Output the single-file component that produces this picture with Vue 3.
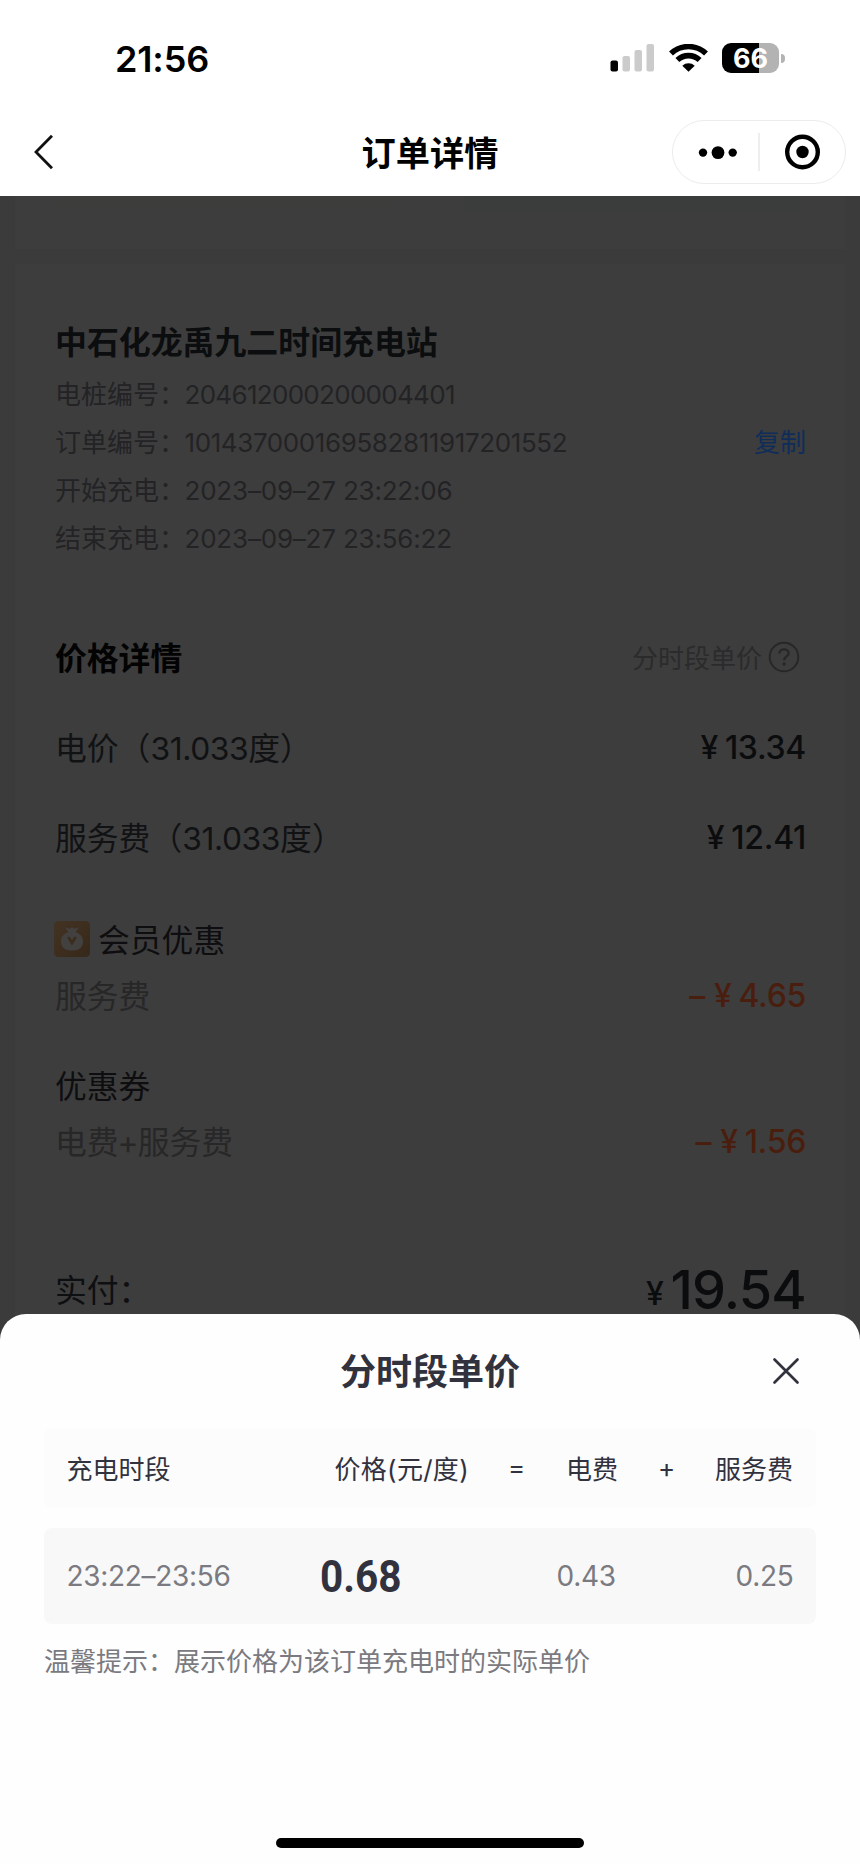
<script setup>
const infos = [
  { label: '电桩编号：', value: '204612000200004401', cls: 'pile' },
  { label: '订单编号：', value: '101437000169582811917201552', cls: 'order', copy: true },
  { label: '开始充电：', value: '2023–09–27 23:22:06' },
  { label: '结束充电：', value: '2023–09–27 23:56:22' },
]
const fees = [
  { name: '电价', price: '13.34' },
  { name: '服务费', price: '12.41' },
]
</script>

<template>
  <div class="page">
    <header class="top">
      <div class="status">
        <span class="time">21:56</span>
        <div class="status-icons">
          <svg width="44" height="28" viewBox="0 0 44 28">
            <rect x="0.5" y="16.5" width="7.5" height="11" rx="2" fill="#000" />
            <rect x="12.5" y="12" width="7.5" height="15.5" rx="2" fill="#cbcbcb" />
            <rect x="24.5" y="6" width="7.5" height="21.5" rx="2" fill="#cbcbcb" />
            <rect x="36.5" y="0" width="7.5" height="27.5" rx="2" fill="#cbcbcb" />
          </svg>
          <svg class="wifi" width="39" height="28" viewBox="0 0 39 28">
            <g fill="none" stroke="#000" stroke-width="5.6">
              <path d="M2 9.6A25.3 25.3 0 0 1 37 9.6" />
              <path d="M8.4 16.1A16 16 0 0 1 30.6 16.1" />
            </g>
            <path d="M13.3 21.7A9 9 0 0 1 25.7 21.7L19.5 27.8Z" fill="#000" />
          </svg>
          <div class="battery">66</div>
          <i class="nub"></i>
        </div>
      </div>
      <div class="nav">
        <svg class="back" width="22" height="36" viewBox="0 0 22 36" fill="none" stroke="#111" stroke-width="2.8"><path d="M19 1.7L3 18L19 34.3" /></svg>
        <h1>订单详情</h1>
        <div class="capsule">
          <svg width="172" height="62" viewBox="0 0 172 62">
            <circle cx="30" cy="31.6" r="4.2" />
            <circle cx="45" cy="31.6" r="6.4" />
            <circle cx="59.7" cy="31.6" r="4.2" />
            <path d="M86 12V50" stroke="#e3e3e3" stroke-width="1.2" />
            <circle cx="129.5" cy="31" r="15.3" fill="none" stroke="#000" stroke-width="4.4" />
            <circle cx="129.5" cy="31" r="6.2" />
          </svg>
        </div>
      </div>
    </header>

    <main class="content">
      <section class="prev"><i class="warm"></i><i class="cool"></i></section>
      <section class="card">
        <h2 class="station">中石化龙禹九二时间充电站</h2>
        <div v-for="r in infos" :key="r.label" class="info">
          <span>{{ r.label }}</span><span class="value" :class="r.cls">{{ r.value }}</span>
          <span v-if="r.copy" class="copy">复制</span>
        </div>
        <div class="heading">
          <h2>价格详情</h2>
          <span class="hint">分时段单价
            <svg width="32" height="32" viewBox="0 0 32 32" fill="none" stroke="#272728" stroke-width="2">
              <circle cx="16" cy="16" r="14.3" />
              <path d="M11.3 12.6C11.5 6.8 20.8 7 20.7 12.3C20.6 15.3 16.2 15.6 16.1 19.2" stroke-width="2.3" />
              <circle cx="16.1" cy="23" r="1.7" fill="#272728" stroke="none" />
            </svg>
          </span>
        </div>
        <div v-for="f in fees" :key="f.name" class="row">
          <span class="desc">{{ f.name }}（<b>31.033</b>度）</span>
          <span class="money"><i>¥</i><span>{{ f.price }}</span></span>
        </div>
        <div class="line first">
          <svg width="36" height="36" viewBox="0 0 36 36">
            <defs><linearGradient id="gold" x1="0" y1="0" x2="1" y2="1"><stop offset="0" stop-color="#433323" /><stop offset="1" stop-color="#362819" /></linearGradient></defs>
            <rect width="36" height="36" rx="4.500" fill="url(#gold)" />
            <path d="M11 6.500L16 7.800L18 6L20 7.800L25 6.500L21.500 11C26 12.600 29 16 29 20.200C29 26.800 24.500 29.600 18 29.600S7 26.800 7 20.200C7 16 10 12.600 14.500 11Z" fill="#434140" />
            <path d="M14.300 16L18 22L21.700 16" fill="none" stroke="#3b2c1d" stroke-width="2.600" />
          </svg>
          <span>会员优惠</span>
        </div>
        <div class="line sub"><span>服务费</span><span class="money off"><em>–</em><i>¥</i><span>4.65</span></span></div>
        <div class="line second"><span>优惠券</span></div>
        <div class="line sub"><span>电费<b class="plus">+</b>服务费</span><span class="money off"><em>–</em><i>¥</i><span>1.56</span></span></div>
        <div class="total"><span>实付：</span><span class="money"><i>¥</i><strong>19.54</strong></span></div>
      </section>
    </main>

    <section class="sheet">
      <div class="sheet-head">
        <h2>分时段单价</h2>
        <svg class="close" width="28" height="28" viewBox="0 0 28 28" fill="none" stroke="#32323f" stroke-width="2.7" stroke-linecap="round"><path d="M2.500 2.500L25.500 25.500M25.500 2.500L2.500 25.500" /></svg>
      </div>
      <div class="thead">
        <span>充电时段</span><span class="unit">价格(元/度)</span><span>=</span><span>电费</span><span>+</span><span>服务费</span>
      </div>
      <div class="trow">
        <span>23:22–23:56</span><span class="sum">0.68</span><span>0.43</span><span>0.25</span>
      </div>
      <p class="tip">温馨提示：展示价格为该订单充电时的实际单价</p>
      <i class="home"></i>
    </section>
  </div>
</template>

<style>
html, body { margin: 0; background: #fff; }
</style>

<style scoped>
.page { width: 860px; height: 1864px; display: flex; flex-direction: column; overflow: hidden; background: #fff; font-family: Inter, "Noto Sans CJK SC", sans-serif; }
.page * { box-sizing: border-box; }
h1, h2, p { margin: 0; }
i, em { font-style: normal; }
b { font-weight: inherit; }
span, h1, h2, p { white-space: nowrap; }
.top { height: 196px; flex: none; }
.status { height: 118px; display: flex; justify-content: space-between; padding: 0 75px 0 115px; }
.time { font-size: 36px; font-weight: 600; line-height: 118px; letter-spacing: -0.15px; }
.status-icons { display: flex; align-items: center; height: 116px; }
.wifi { margin-left: 15px; }
.battery { width: 57px; height: 30px; border-radius: 9px; margin-left: 14px; background: linear-gradient(90deg, #000 0 37.5px, #b3b3b3 37.5px); color: #fff; font-size: 27px; font-weight: 700; line-height: 32px; text-align: center; }
.nub { width: 4px; height: 9px; border-radius: 0 5px 5px 0; background: #b3b3b3; margin-left: 2px; }
.nav { height: 66px; margin-top: 1px; display: grid; grid-template-columns: 1fr auto 1fr; align-items: center; padding: 0 14px; }
.back { margin-left: 19px; }
h1 { font-size: 34.2px; font-weight: 600; padding-bottom: 3px; }
.capsule { justify-self: end; width: 174px; height: 64px; border: 1px solid #ececec; border-radius: 32px; }
.capsule svg { display: block; }
.content { flex: none; height: 1150px; background: #3b3b3b; padding: 0 15px; display: flex; flex-direction: column; gap: 15px; }
.prev { height: 53px; background: #3d3d3d; display: flex; justify-content: space-between; padding: 0 45px 0 40px; }
.warm { width: 340px; height: 11px; background: #3d3d3b; }
.cool { width: 336px; height: 15px; background: #3a3d3c; }
.card { flex: 1; background: #3d3d3d; padding: 55px 40px 0; }
.station { height: 48px; line-height: 48px; font-size: 31.9px; font-weight: 600; color: #0c0d0f; margin-bottom: 4px; }
.info { display: flex; height: 48px; line-height: 48px; font-size: 26px; font-weight: 400; color: #232325; }
.value { letter-spacing: -0.2px; margin-left: -0.5px; }
.pile { letter-spacing: -0.7px; }
.order { letter-spacing: -0.4px; }
.copy { margin: 0 -1px 0 auto; color: #102d5a; }
.heading { margin-top: 64px; height: 60px; display: flex; justify-content: space-between; align-items: center; padding-right: 5px; }
.heading h2 { font-size: 31.8px; font-weight: 600; color: #030303; padding-bottom: 2px; }
.hint { display: flex; align-items: center; gap: 6px; font-size: 26px; color: #2b2b2c; padding-bottom: 1px; }
.row { height: 90px; display: flex; justify-content: space-between; align-items: center; font-size: 31.8px; color: #111214; }
.heading + .row { margin-top: 15px; }
.desc { padding-bottom: 3px; }
.desc b { letter-spacing: -0.4px; }
.money { font-weight: 500; font-size: 32px; letter-spacing: -0.3px; color: #0b0c0d; display: flex; align-items: baseline; margin-right: -1px; }
.money i { margin-right: 7px; }
.money em { margin-right: 9px; }
.line .off { color: #4a1e0e; font-weight: 500; }
.line { height: 56px; display: flex; align-items: center; font-size: 31.8px; color: #0e0e10; }
.line > span:first-of-type { padding-bottom: 3px; }
.line svg { margin: 0 8px 0 -1px; }
.line.sub { justify-content: space-between; color: #272728; }
.line.first { margin-top: 29px; }
.line.second { margin-top: 34px; }
.plus { margin: 0 -1px; }
.total { height: 60px; margin-top: 91px; display: flex; justify-content: space-between; align-items: center; font-size: 31.8px; color: #0e0f11; }
.total > span:first-child { padding-bottom: 4px; }
.total .money i { position: relative; top: -4px; }
.total strong { font-size: 54px; font-weight: 500; line-height: 60px; letter-spacing: -0.8px; }
.sheet { position: relative; margin-top: -32px; height: 550px; background: #fefefe; border-radius: 26px 26px 0 0; padding: 0 44px; display: flex; flex-direction: column; color: #32323f; }
.sheet-head { height: 114px; display: grid; grid-template-columns: 1fr auto 1fr; align-items: center; }
.sheet-head h2 { grid-column: 2; font-size: 36px; font-weight: 600; padding-bottom: 4px; }
.close { justify-self: end; margin-right: 16px; }
.thead { height: 80px; background: #fcfcfd; border-radius: 7px; display: grid; grid-template-columns: 268px 173.5px 58px 92px 57px 1fr; align-items: center; font-size: 26px; padding: 0 22px 2px 22.5px; }
.unit { letter-spacing: 0.3px; }
.trow { margin-top: 20px; height: 96px; background: #f8f8f8; border-radius: 8px; display: grid; grid-template-columns: 253px 237px 1fr auto; align-items: center; font-size: 28px; letter-spacing: -0.3px; color: #7a7a80; padding: 0 22.5px; }
.sum { font: 700 45px Roboto, sans-serif; letter-spacing: 0; color: #32323f; transform: scaleX(0.9); transform-origin: left; }
.tip { margin-top: 19px; line-height: 38px; font-size: 26px; color: #7a7a80; }
.home { align-self: center; margin-top: auto; margin-bottom: 16px; width: 308px; height: 10px; border-radius: 5px; background: #000; }
</style>
